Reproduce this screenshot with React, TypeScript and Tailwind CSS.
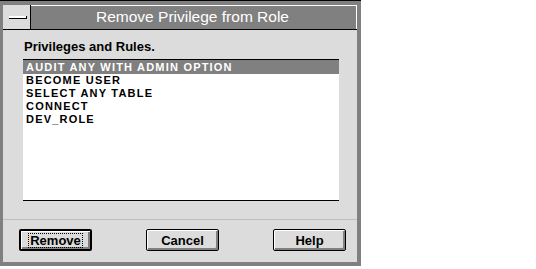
const items = [
  'AUDIT ANY WITH ADMIN OPTION',
  'BECOME USER',
  'SELECT ANY TABLE',
  'CONNECT',
  'DEV_ROLE',
];

const font = { fontFamily: '"Liberation Sans", Arial, sans-serif' };

const Button = ({ label, isDefault }: { label: string; isDefault?: boolean }) => (
  <div
    className={`w-[73px] h-[22px] rounded-[2px] border-black bg-[#dcdcdc] flex items-center justify-center shadow-[inset_1px_1px_0_#fff,inset_-2px_-2px_0_#808080] ${
      isDefault ? 'border-2' : 'border'
    }`}
  >
    {isDefault ? (
      <span className="border border-dotted border-black px-[1px] leading-[13px] text-[13px] font-bold text-black">
        {label}
      </span>
    ) : (
      <span className="text-[13px] font-bold text-black leading-[13px]">{label}</span>
    )}
  </div>
);

export default function App() {
  return (
    <div className="w-[536px] h-[269px] bg-white" style={font}>
      <div className="w-[361px] h-[266px] bg-[#808080] border-t border-black pt-[4px] pl-[3px] pr-[4px] pb-[4px] flex flex-col">
        {/* Title bar */}
        <div className="h-[25px] flex border-b border-black">
          <div className="w-[28px] bg-[#dcdcdc] border-r border-black flex items-center pl-[6px]">
            <div className="w-[18px] h-[3px] bg-white border-b border-r border-black" />
          </div>
          <div className="flex-1 border-t border-r border-white flex items-center justify-center text-white text-[15.5px] leading-none pb-[1px] pr-[2px]">
            Remove Privilege from Role
          </div>
        </div>

        {/* Client area */}
        <div className="flex-1 bg-[#dcdcdc] flex flex-col">
          <div className="pt-[10px] pl-[21px] text-[13px] font-bold leading-[14px] text-black">
            Privileges and Rules.
          </div>
          <div className="mt-[5px] ml-[20px] w-[316px] h-[142px] bg-white border-t border-b border-black">
            {items.map((item, i) => (
              <div
                key={item}
                className={`pl-[3px] text-[11px] tracking-[1.2px] font-bold ${
                  i === 0 ? 'bg-[#808080] text-white h-[14px] leading-[14px]' : 'text-black h-[13px] leading-[13px]'
                }`}
              >
                {item}
              </div>
            ))}
          </div>
          <div className="mt-[18px] h-px bg-[#bdbdbd]" />
          <div className="mt-[9px] pl-[16px] flex gap-[54px]">
            <Button label="Remove" isDefault />
            <Button label="Cancel" />
            <Button label="Help" />
          </div>
        </div>
      </div>
    </div>
  );
}
